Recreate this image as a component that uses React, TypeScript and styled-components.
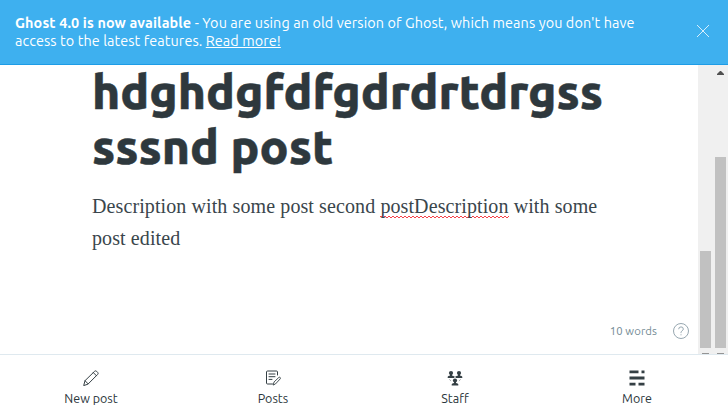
import React from "react";
import styled, { createGlobalStyle } from "styled-components";

const sans = `Ubuntu, "Noto Sans", "Open Sans", sans-serif`;

const GlobalStyle = createGlobalStyle`
  * { box-sizing: border-box; }
  body { margin: 0; background: #fff; overflow: hidden; }
`;

const Page = styled.div`
  width: 728px;
  height: 418px;
  display: flex;
  flex-direction: column;
  font-family: ${sans};
  color: #2e383d;
  background: #fff;
`;

const Banner = styled.header`
  flex: 0 0 65px;
  display: flex;
  align-items: flex-start;
  padding: 14px 19px 0 15px;
  background: #3eb0ef;
  border-bottom: 1px solid #1d9ce6;
  color: #fff;
`;

const Message = styled.div`
  flex: 1;
  font-size: 14.4px;
  line-height: 18px;
  white-space: nowrap;
`;

const Run = styled.span<{ $track: number }>`
  letter-spacing: ${(p) => p.$track}px;
`;

const Strong = styled.strong`
  font-weight: 700;
  letter-spacing: 0.12px;
`;

const ReadMore = styled.a`
  color: #fff;
  text-decoration: underline;
  text-underline-offset: 1px;
  text-decoration-thickness: 1px;
`;

const Close = styled.button`
  margin: 11px 0 0;
  padding: 0;
  border: 0;
  background: none;
  line-height: 0;
  color: #fff;
`;

const Workspace = styled.main`
  flex: 0 0 289px;
  display: flex;
`;

const Editor = styled.section`
  width: 698px;
  padding: 0 9px 0 92px;
  display: flex;
  flex-direction: column;
`;

const Title = styled.h1`
  margin: -1px 0 0;
  font-size: 48px;
  line-height: 55px;
  font-weight: 800;
  color: #2e383d;
  -webkit-text-stroke: 0.5px #2e383d;
  white-space: nowrap;
`;

const Body = styled.p`
  margin: 16px 0 0;
  font-family: "Liberation Serif", serif;
  font-size: 20px;
  line-height: 32px;
  letter-spacing: 0.1px;
  color: #3a464c;
  white-space: nowrap;
`;

/* Spelling marker: two rows of short dashes, offset by half a period. */
const Misspelled = styled.span`
  padding-bottom: 1px;
  background-image:
    linear-gradient(90deg, #f5424a 50%, transparent 50%),
    linear-gradient(90deg, transparent 50%, #f5424a 50%);
  background-size: 4px 1px;
  background-position: 0 calc(100% - 1px), 0 100%;
  background-repeat: repeat-x;
`;

const Status = styled.div`
  margin-top: auto;
  height: 46px;
  display: flex;
  justify-content: flex-end;
  align-items: center;
  gap: 16px;
  font-size: 11.3px;
  line-height: 16px;
  letter-spacing: 0.1px;
  color: #738a94;
`;

const Track = styled.div`
  width: 15px;
  padding: 0 2px;
  display: flex;
  flex-direction: column;
  align-items: center;
  background: #f0f0f0;
`;

const ArrowSlot = styled.div<{ $height: number }>`
  height: ${(p) => p.$height}px;
  line-height: 0;
`;

const Thumb = styled.div<{ $height: number }>`
  width: 11px;
  height: ${(p) => p.$height}px;
  background: #c1c1c1;
`;

const ArrowTip = styled.div`
  width: 7px;
  height: 1px;
  margin-top: 5px;
  background: #949494;
`;

const Nav = styled.nav`
  flex: 1;
  display: grid;
  grid-template-columns: repeat(4, 182px);
  border-top: 1px solid #dfe9ef;
`;

const NavItem = styled.a`
  display: flex;
  flex-direction: column;
  align-items: center;
  padding-top: 15px;
  gap: 3px;
  font-size: 12.5px;
  line-height: 18px;
  color: #2b363b;
`;

const Icon = ({ children }: { children: React.ReactNode }) => (
  <svg width="16" height="16" viewBox="0 0 16 16" fill="none" stroke="#343f44" strokeLinejoin="round" strokeLinecap="round">
    {children}
  </svg>
);

const PencilIcon = () => (
  <Icon>
    <path d="M.8 15.2 2 10.7 11.6 1.3q1-.9 2 0l1.1 1.1q.9 1 0 2L5.2 13.9ZM2 10.7l3.2 3.2M10.3 2.6l3.2 3.2" />
  </Icon>
);

const PostsIcon = () => (
  <Icon>
    <path d="M12.5 5V2q0-1-1-1h-9q-1 0-1 1v11q0 1 1 1h5M4 4h6M4 6.7h6M4 9.4h3" />
    <path d="m8.3 14.7.8-2.8 4.7-4.4q.8-.6 1.4 0t0 1.4l-4.5 4.8Z" strokeWidth=".9" />
  </Icon>
);

const StaffIcon = () => (
  <Icon>
    <g fill="#343f44" stroke="none">
      <circle cx="4" cy="3" r="2.1" />
      <path d="M.7 8V6.8Q1 6 3 5.6V4h2v1.6q2 .4 2.3 1.2V8Z" />
      <circle cx="12" cy="3" r="2.1" />
      <path d="M8.7 8V6.8Q9 6 11 5.6V4h2v1.6q2 .4 2.3 1.2V8Z" />
      <circle cx="8" cy="10.5" r="2.1" />
      <path d="M4.7 15.5v-1.2q.3-.8 2.3-1.2v-1.6h2v1.6q2 .4 2.3 1.2v1.2Z" />
    </g>
    <path d="m2.6 9.5 1.1 1.3M13.4 9.5l-1.1 1.3M7.2 6.7h1.6" strokeWidth=".7" opacity=".6" />
  </Icon>
);

const MoreIcon = () => (
  <Icon>
    <path d="M.5 1.8h9M12.5 1.8h3M.5 8h15M.5 14.2h6M9.5 14.2h6" strokeWidth="2.8" strokeLinecap="butt" />
  </Icon>
);

const HelpIcon = () => (
  <svg width="16" height="16" viewBox="0 0 16 16" fill="none" stroke="#8b9da7" strokeWidth=".9">
    <circle cx="8" cy="8" r="7.5" />
    <path d="M5.7 6.2q0-2.3 2.3-2.3t2.3 2.1q0 1.1-1.1 1.8Q8 8.4 8 9.6v.5M8 11.3v1" />
  </svg>
);

const items = [
  { label: "New post", icon: <PencilIcon /> },
  { label: "Posts", icon: <PostsIcon /> },
  { label: "Staff", icon: <StaffIcon /> },
  { label: "More", icon: <MoreIcon /> },
];

export default function App() {
  return (
    <Page>
      <GlobalStyle />
      <Banner>
        <Message>
          <Strong>Ghost 4.0 is now available</Strong>
          <Run $track={0.1}> - You are using an old version of Ghost, which means you don't have</Run>
          <br />
          <Run $track={0.09}>access to the latest features. <ReadMore>Read more!</ReadMore></Run>
        </Message>
        <Close aria-label="Close">
          <svg width="12" height="12" viewBox="0 0 12 12" stroke="#fff" strokeWidth=".8">
            <path d="m0 0 12 12M12 0 0 12" />
          </svg>
        </Close>
      </Banner>
      <Workspace>
        <Editor>
          <Title>
            hdghdgfdfgdrdrtdrgss
            <br />
            sssnd post
          </Title>
          <Body>
            Description with some post second <Misspelled>postDescription</Misspelled> with some
            <br />
            post edited
          </Body>
          <Status>
            <span>10 words</span>
            <HelpIcon />
          </Status>
        </Editor>
        <Track>
          <ArrowSlot $height={186} />
          <Thumb $height={97} />
          <ArrowTip />
        </Track>
        <Track>
          <ArrowSlot $height={92}>
            <svg width="7" height="10" viewBox="0 0 7 10">
              <path d="M0 10V9l3-3h1l3 3v1Z" fill="#505050" />
            </svg>
          </ArrowSlot>
          <Thumb $height={191} />
          <ArrowTip />
        </Track>
      </Workspace>
      <Nav>
        {items.map((item) => (
          <NavItem key={item.label}>
            {item.icon}
            <span>{item.label}</span>
          </NavItem>
        ))}
      </Nav>
    </Page>
  );
}
